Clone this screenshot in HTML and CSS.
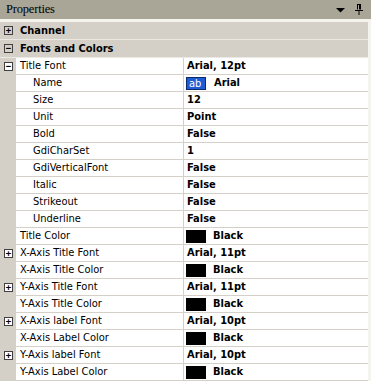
FILE: index.html
```html
<!DOCTYPE html>
<html>
<head>
<meta charset="utf-8">
<link rel="stylesheet" href="styles.css">
</head>
<body>
<div class="panel">
  <div class="titlebar">
    <span class="title">Properties</span>
    <span class="tools">
      <svg class="drop" width="9" height="5" viewBox="0 0 9 5"><path d="M0 0h9L4.5 4.5z" fill="#000"/></svg>
      <svg class="pin" width="8" height="11" viewBox="0 0 8 11"><path d="M2 0.5h4M2.5 0.5v5M5.5 0.5v5M4.5 0.5v5M0 6.5h8M4 6.5v4.5" stroke="#000" stroke-width="1" fill="none"/></svg>
    </span>
  </div>
  <div class="grid">
    <div class="cat"><span class="gut"><span class="box">+</span></span><span class="cat-label">Channel</span></div>
    <div class="cat"><span class="gut"><span class="box">−</span></span><span class="cat-label">Fonts and Colors</span></div>

    <div class="row"><span class="gut"><span class="box">−</span></span><span class="name">Title Font</span><span class="value">Arial, 12pt</span></div>
    <div class="row"><span class="gut"></span><span class="name sub">Name</span><span class="value"><span class="ab">ab</span>Arial</span></div>
    <div class="row"><span class="gut"></span><span class="name sub">Size</span><span class="value">12</span></div>
    <div class="row"><span class="gut"></span><span class="name sub">Unit</span><span class="value">Point</span></div>
    <div class="row"><span class="gut"></span><span class="name sub">Bold</span><span class="value">False</span></div>
    <div class="row"><span class="gut"></span><span class="name sub">GdiCharSet</span><span class="value">1</span></div>
    <div class="row"><span class="gut"></span><span class="name sub">GdiVerticalFont</span><span class="value">False</span></div>
    <div class="row"><span class="gut"></span><span class="name sub">Italic</span><span class="value">False</span></div>
    <div class="row"><span class="gut"></span><span class="name sub">Strikeout</span><span class="value">False</span></div>
    <div class="row"><span class="gut"></span><span class="name sub">Underline</span><span class="value">False</span></div>
    <div class="row"><span class="gut"></span><span class="name">Title Color</span><span class="value"><span class="swatch"></span>Black</span></div>
    <div class="row"><span class="gut"><span class="box">+</span></span><span class="name">X-Axis Title Font</span><span class="value">Arial, 11pt</span></div>
    <div class="row"><span class="gut"></span><span class="name">X-Axis Title Color</span><span class="value"><span class="swatch"></span>Black</span></div>
    <div class="row"><span class="gut"><span class="box">+</span></span><span class="name">Y-Axis Title Font</span><span class="value">Arial, 11pt</span></div>
    <div class="row"><span class="gut"></span><span class="name">Y-Axis Title Color</span><span class="value"><span class="swatch"></span>Black</span></div>
    <div class="row"><span class="gut"><span class="box">+</span></span><span class="name">X-Axis label Font</span><span class="value">Arial, 10pt</span></div>
    <div class="row"><span class="gut"></span><span class="name">X-Axis Label Color</span><span class="value"><span class="swatch"></span>Black</span></div>
    <div class="row"><span class="gut"><span class="box">+</span></span><span class="name">Y-Axis label Font</span><span class="value">Arial, 10pt</span></div>
    <div class="row"><span class="gut"></span><span class="name">Y-Axis Label Color</span><span class="value"><span class="swatch"></span>Black</span></div>
  </div>
</div>
</body>
</html>
```

FILE: styles.css
```css
html, body {
  margin: 0;
  padding: 0;
  background: #f4f3ee;
}
.panel {
  width: 371px;
  height: 381px;
  overflow: hidden;
  background: #f4f3ee;
  font-family: "DejaVu Sans Condensed", "DejaVu Sans", sans-serif;
  font-size: 11px;
  color: #000;
}
.titlebar {
  height: 19px;
  background: #a9a697;
  display: flex;
  align-items: center;
  justify-content: space-between;
  padding: 0 8px 0 6px;
  box-sizing: border-box;
}
.title {
  font-family: "Liberation Serif", serif;
  font-size: 12.5px;
  color: #000;
  letter-spacing: -0.2px;
}
.tools {
  display: flex;
  align-items: center;
  gap: 10px;
}
.drop { margin-top: 2px; }
.pin { margin-top: 0; }
.grid {
  margin-top: 3px;
  width: 368px;
  background: #fff;
}
.cat {
  height: 17px;
  display: flex;
  align-items: center;
  background: #d4d0c8;
  border-bottom: 1px solid #ebe9e3;
  font-weight: bold;
}
.gut {
  width: 16px;
  flex: none;
  align-self: stretch;
  background: #d4d0c8;
  display: flex;
  align-items: center;
  padding-left: 4px;
  box-sizing: border-box;
}
.box {
  width: 9px;
  height: 9px;
  box-sizing: border-box;
  border: 1px solid #404040;
  background: #fff;
  font-family: "DejaVu Sans Mono", monospace;
  font-weight: bold;
  font-size: 9px;
  line-height: 7px;
  text-align: center;
  color: #000;
  overflow: hidden;
}
.cat .box { background: transparent; }
.cat-label {
  padding-left: 4px;
  line-height: 17px;
}
.row {
  height: 16px;
  display: flex;
  border-bottom: 1px solid #d4d0c8;
  line-height: 16px;
  white-space: nowrap;
}
.name {
  width: 168px;
  flex: none;
  box-sizing: border-box;
  padding-left: 4px;
  border-right: 1px solid #d4d0c8;
  background: #fff;
}
.name.sub { padding-left: 17px; }
.value {
  flex: 1;
  padding-left: 3px;
  font-weight: bold;
  display: flex;
  align-items: center;
  background: #fff;
}
.swatch {
  width: 20px;
  height: 13px;
  background: #000;
  margin-right: 7px;
  margin-left: -1px;
}
.ab {
  width: 20px;
  height: 13px;
  box-sizing: border-box;
  background: #1e5bd6;
  border: 1px solid #0b2a6b;
  color: #fff;
  font-weight: normal;
  line-height: 11px;
  padding-left: 2px;
  margin-left: -1px;
  margin-right: 8px;
}
```
